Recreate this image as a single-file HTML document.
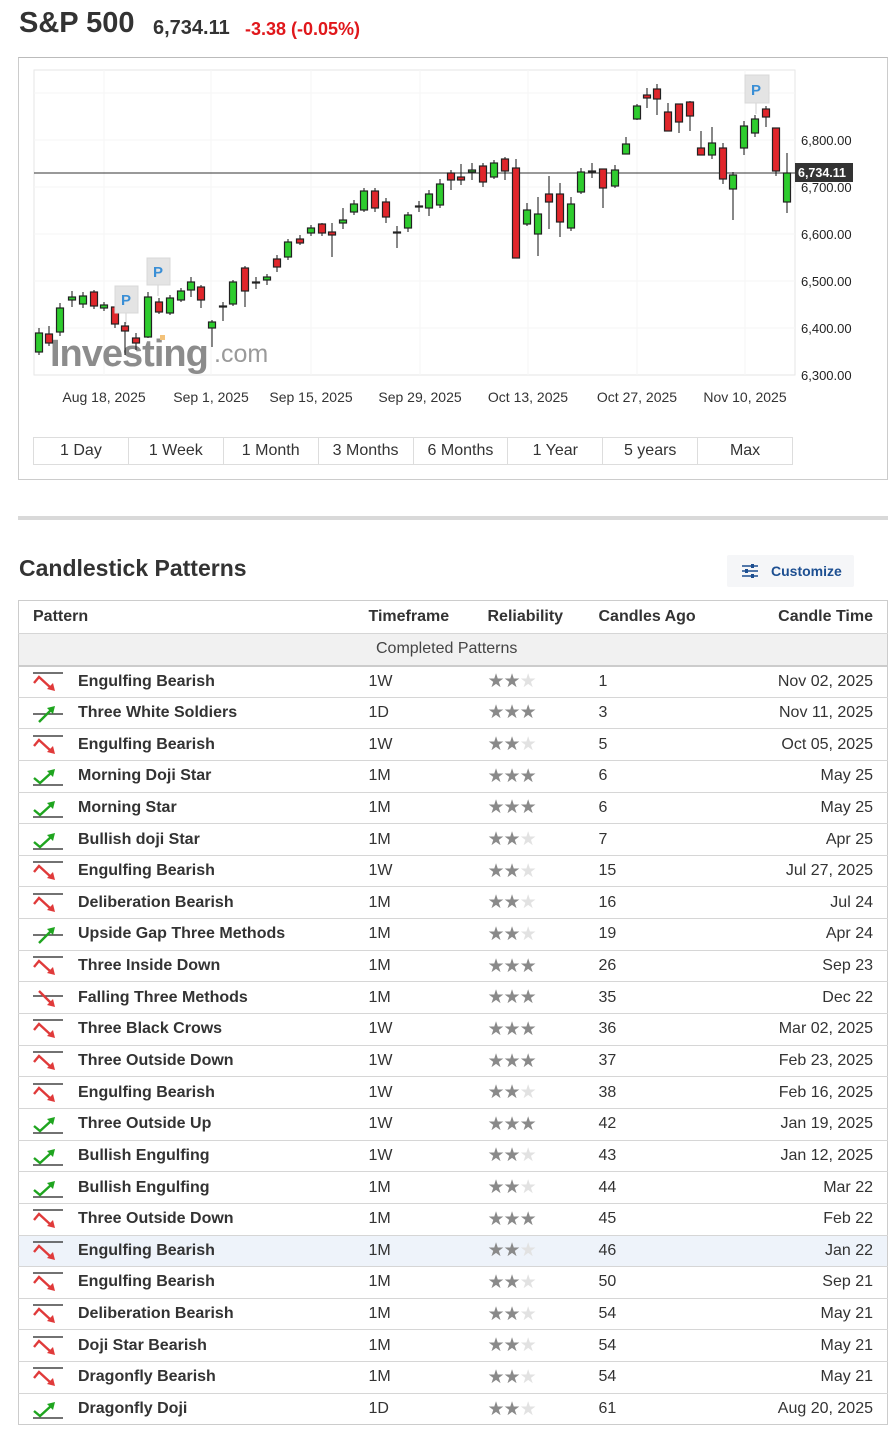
<!DOCTYPE html>
<html><head><meta charset="utf-8"><style>
*{margin:0;padding:0;box-sizing:border-box}
body{width:896px;height:1430px;background:#fff;font-family:"Liberation Sans",Arial,sans-serif;color:#333;position:relative;overflow:hidden}
.abs{position:absolute}
.title{left:19px;top:7px;font-size:29px;font-weight:bold;color:#333}
.price{left:153px;top:17px;font-size:20px;font-weight:bold;color:#333}
.chg{left:245px;top:19px;font-size:18px;font-weight:bold;color:#e0171b}
.chartbox{left:18px;top:57px;width:870px;height:423px;border:1px solid #ccc;border-top-color:#bbb}
.dates span{position:absolute;top:389px;font-size:14px;color:#333;transform:translateX(-50%);white-space:nowrap}
.tabs{left:33px;top:437px;width:760px;height:28px;border:1px solid #ddd;display:flex}
.tabs div{flex:1;border-right:1px solid #ddd;text-align:center;font-size:16px;line-height:26px;color:#333}
.tabs div:last-child{border-right:none}
.sep{left:18px;top:516px;width:870px;height:4px;background:#d9d9d9}
.h2{left:19px;top:555px;font-size:23px;font-weight:bold;color:#333}
.cust{left:727px;top:555px;width:127px;height:32px;background:#f5f6f8;border-radius:2px;font-size:14px;font-weight:bold;color:#1d4f91;line-height:32px;padding-left:44px}
table{position:absolute;left:18px;top:600px;width:870px;border-collapse:collapse;border:1px solid #ccc;font-size:16px}
th{height:33px;text-align:left;font-weight:bold;color:#333;padding:0}
td{height:31.65px;border-top:1px solid #d6d6d6;padding:0;color:#333}
.sub td{background:#f1f1f1;color:#444;height:32px;border-bottom:2px solid #ccc;padding-left:357px}
td.n{font-weight:bold}
.r{text-align:right;padding-right:14px}
tr.hl td{background:#eef3fa}
.st{color:#8a8a8a;font-size:19px;letter-spacing:-1px}
.st i{font-style:normal;color:#e2e2e2}
.ic{vertical-align:middle;margin-left:14px;margin-right:0}
</style></head><body>
<div class="abs title">S&amp;P 500</div>
<div class="abs price">6,734.11</div>
<div class="abs chg">-3.38 (-0.05%)</div>
<div class="abs chartbox"></div>
<svg class="abs" style="left:0;top:0" width="896" height="480">
<rect x="34" y="70" width="761" height="305" fill="none" stroke="#e6e6e6"/>
<g stroke="#f5f5f5">
<line x1="34" y1="93" x2="795" y2="93"/><line x1="34" y1="140" x2="795" y2="140"/><line x1="34" y1="187" x2="795" y2="187"/><line x1="34" y1="234" x2="795" y2="234"/><line x1="34" y1="281" x2="795" y2="281"/><line x1="34" y1="328" x2="795" y2="328"/>
<line x1="104" y1="70" x2="104" y2="375"/><line x1="211" y1="70" x2="211" y2="375"/><line x1="311" y1="70" x2="311" y2="375"/><line x1="420" y1="70" x2="420" y2="375"/><line x1="528" y1="70" x2="528" y2="375"/><line x1="637" y1="70" x2="637" y2="375"/><line x1="745" y1="70" x2="745" y2="375"/>
</g>
<text x="50" y="366" font-family="Liberation Sans" font-weight="bold" font-size="38" fill="#8c8c8c" letter-spacing="-1">Investing</text>
<text x="214" y="362" font-family="Liberation Sans" font-size="25" fill="#9a9a9a">.com</text>
<rect x="160" y="335" width="5" height="5" fill="#f3c27a"/>
<line x1="34" y1="173" x2="795" y2="173" stroke="#333" stroke-width="1"/>
<g stroke="#111" stroke-width="1">
<line x1="39" y1="328" x2="39" y2="355"/><line x1="49" y1="326" x2="49" y2="346"/><line x1="60" y1="303" x2="60" y2="336"/><line x1="72" y1="291" x2="72" y2="307"/><line x1="83" y1="292" x2="83" y2="308"/><line x1="94" y1="290" x2="94" y2="309"/><line x1="104" y1="302" x2="104" y2="311"/><line x1="115" y1="300" x2="115" y2="328"/><line x1="125" y1="322" x2="125" y2="355"/><line x1="136" y1="333" x2="136" y2="350"/><line x1="148" y1="292" x2="148" y2="338"/><line x1="159" y1="298" x2="159" y2="314"/><line x1="170" y1="295" x2="170" y2="315"/><line x1="181" y1="288" x2="181" y2="302"/><line x1="191" y1="277" x2="191" y2="297"/><line x1="201" y1="285" x2="201" y2="308"/><line x1="212" y1="320" x2="212" y2="347"/><line x1="223" y1="302" x2="223" y2="321"/><line x1="233" y1="280" x2="233" y2="306"/><line x1="245" y1="266" x2="245" y2="307"/><line x1="256" y1="277" x2="256" y2="289"/><line x1="267" y1="274" x2="267" y2="285"/><line x1="277" y1="255" x2="277" y2="272"/><line x1="288" y1="239" x2="288" y2="260"/><line x1="300" y1="235" x2="300" y2="245"/><line x1="311" y1="225" x2="311" y2="236"/><line x1="322" y1="223" x2="322" y2="236"/><line x1="332" y1="223" x2="332" y2="257"/><line x1="343" y1="208" x2="343" y2="229"/><line x1="354" y1="200" x2="354" y2="215"/><line x1="364" y1="188" x2="364" y2="212"/><line x1="375" y1="188" x2="375" y2="212"/><line x1="386" y1="198" x2="386" y2="223"/><line x1="397" y1="226" x2="397" y2="248"/><line x1="408" y1="212" x2="408" y2="232"/><line x1="419" y1="201" x2="419" y2="212"/><line x1="429" y1="190" x2="429" y2="216"/><line x1="440" y1="179" x2="440" y2="208"/><line x1="451" y1="170" x2="451" y2="190"/><line x1="461" y1="164" x2="461" y2="185"/><line x1="472" y1="163" x2="472" y2="180"/><line x1="483" y1="163" x2="483" y2="187"/><line x1="494" y1="160" x2="494" y2="179"/><line x1="505" y1="157" x2="505" y2="180"/><line x1="516" y1="159" x2="516" y2="258"/><line x1="527" y1="203" x2="527" y2="226"/><line x1="538" y1="197" x2="538" y2="256"/><line x1="549" y1="176" x2="549" y2="229"/><line x1="560" y1="183" x2="560" y2="237"/><line x1="571" y1="197" x2="571" y2="231"/><line x1="581" y1="168" x2="581" y2="194"/><line x1="592" y1="163" x2="592" y2="178"/><line x1="603" y1="169" x2="603" y2="208"/><line x1="615" y1="165" x2="615" y2="188"/><line x1="626" y1="137" x2="626" y2="154"/><line x1="637" y1="104" x2="637" y2="120"/><line x1="647" y1="88" x2="647" y2="108"/><line x1="657" y1="84" x2="657" y2="115"/><line x1="668" y1="103" x2="668" y2="131"/><line x1="679" y1="104" x2="679" y2="133"/><line x1="690" y1="101" x2="690" y2="131"/><line x1="701" y1="131" x2="701" y2="155"/><line x1="712" y1="127" x2="712" y2="159"/><line x1="723" y1="143" x2="723" y2="184"/><line x1="733" y1="172" x2="733" y2="220"/><line x1="744" y1="121" x2="744" y2="155"/><line x1="755" y1="115" x2="755" y2="137"/><line x1="766" y1="106" x2="766" y2="127"/><line x1="776" y1="128" x2="776" y2="176"/><line x1="787" y1="153" x2="787" y2="213"/>
</g>
<g stroke="#222" stroke-width="1.2">
<rect x="35.5" y="333" width="7" height="19" fill="#2ecc2e"/><rect x="45.5" y="334" width="7" height="9" fill="#e0262b"/><rect x="56.5" y="308" width="7" height="24" fill="#2ecc2e"/><rect x="68.5" y="297" width="7" height="3" fill="#2ecc2e"/><rect x="79.5" y="296" width="7" height="8" fill="#2ecc2e"/><rect x="90.5" y="292" width="7" height="14" fill="#e0262b"/><rect x="100.5" y="305" width="7" height="3" fill="#2ecc2e"/><rect x="111.5" y="307" width="7" height="17" fill="#e0262b"/><rect x="121.5" y="326" width="7" height="5" fill="#e0262b"/><rect x="132.5" y="338" width="7" height="5" fill="#e0262b"/><rect x="144.5" y="297" width="7" height="40" fill="#2ecc2e"/><rect x="155.5" y="302" width="7" height="10" fill="#e0262b"/><rect x="166.5" y="298" width="7" height="15" fill="#2ecc2e"/><rect x="177.5" y="291" width="7" height="9" fill="#2ecc2e"/><rect x="187.5" y="282" width="7" height="8" fill="#2ecc2e"/><rect x="197.5" y="287" width="7" height="13" fill="#e0262b"/><rect x="208.5" y="322" width="7" height="6" fill="#2ecc2e"/><rect x="219.5" y="306" width="7" height="1" fill="#2ecc2e"/><rect x="229.5" y="282" width="7" height="22" fill="#2ecc2e"/><rect x="241.5" y="268" width="7" height="23" fill="#e0262b"/><rect x="252.5" y="282" width="7" height="1" fill="#2ecc2e"/><rect x="263.5" y="277" width="7" height="3" fill="#2ecc2e"/><rect x="273.5" y="259" width="7" height="8" fill="#e0262b"/><rect x="284.5" y="242" width="7" height="15" fill="#2ecc2e"/><rect x="296.5" y="239" width="7" height="4" fill="#e0262b"/><rect x="307.5" y="228" width="7" height="5" fill="#2ecc2e"/><rect x="318.5" y="224" width="7" height="9" fill="#e0262b"/><rect x="328.5" y="232" width="7" height="3" fill="#e0262b"/><rect x="339.5" y="220" width="7" height="3" fill="#2ecc2e"/><rect x="350.5" y="204" width="7" height="8" fill="#2ecc2e"/><rect x="360.5" y="191" width="7" height="19" fill="#2ecc2e"/><rect x="371.5" y="191" width="7" height="17" fill="#e0262b"/><rect x="382.5" y="202" width="7" height="15" fill="#e0262b"/><rect x="393.5" y="232" width="7" height="1" fill="#2ecc2e"/><rect x="404.5" y="215" width="7" height="13" fill="#2ecc2e"/><rect x="415.5" y="206" width="7" height="1" fill="#2ecc2e"/><rect x="425.5" y="194" width="7" height="14" fill="#2ecc2e"/><rect x="436.5" y="184" width="7" height="21" fill="#2ecc2e"/><rect x="447.5" y="173" width="7" height="7" fill="#e0262b"/><rect x="457.5" y="177" width="7" height="3" fill="#e0262b"/><rect x="468.5" y="170" width="7" height="2" fill="#2ecc2e"/><rect x="479.5" y="166" width="7" height="16" fill="#e0262b"/><rect x="490.5" y="163" width="7" height="14" fill="#2ecc2e"/><rect x="501.5" y="159" width="7" height="12" fill="#e0262b"/><rect x="512.5" y="168" width="7" height="90" fill="#e0262b"/><rect x="523.5" y="210" width="7" height="14" fill="#2ecc2e"/><rect x="534.5" y="214" width="7" height="20" fill="#2ecc2e"/><rect x="545.5" y="194" width="7" height="8" fill="#e0262b"/><rect x="556.5" y="194" width="7" height="28" fill="#e0262b"/><rect x="567.5" y="204" width="7" height="24" fill="#2ecc2e"/><rect x="577.5" y="172" width="7" height="20" fill="#2ecc2e"/><rect x="588.5" y="171" width="7" height="1" fill="#2ecc2e"/><rect x="599.5" y="169" width="7" height="19" fill="#e0262b"/><rect x="611.5" y="170" width="7" height="16" fill="#2ecc2e"/><rect x="622.5" y="144" width="7" height="10" fill="#2ecc2e"/><rect x="633.5" y="106" width="7" height="13" fill="#2ecc2e"/><rect x="643.5" y="95" width="7" height="3" fill="#e0262b"/><rect x="653.5" y="89" width="7" height="10" fill="#e0262b"/><rect x="664.5" y="112" width="7" height="19" fill="#e0262b"/><rect x="675.5" y="104" width="7" height="18" fill="#e0262b"/><rect x="686.5" y="102" width="7" height="14" fill="#e0262b"/><rect x="697.5" y="148" width="7" height="7" fill="#e0262b"/><rect x="708.5" y="143" width="7" height="12" fill="#2ecc2e"/><rect x="719.5" y="148" width="7" height="31" fill="#e0262b"/><rect x="729.5" y="175" width="7" height="14" fill="#2ecc2e"/><rect x="740.5" y="126" width="7" height="22" fill="#2ecc2e"/><rect x="751.5" y="119" width="7" height="14" fill="#2ecc2e"/><rect x="762.5" y="109" width="7" height="8" fill="#e0262b"/><rect x="772.5" y="128" width="7" height="43" fill="#e0262b"/><rect x="783.5" y="173" width="7" height="29" fill="#2ecc2e"/>
</g>
<g font-family="Liberation Sans" font-weight="bold" font-size="15" fill="#3a8fd6" stroke="none">
<line x1="126" y1="313" x2="126" y2="324" stroke="#ccc"/><rect x="115" y="286" width="23" height="27" fill="#e4e4e4" stroke="#d8d8d8"/><text x="121" y="305">P</text>
<line x1="158" y1="285" x2="158" y2="296" stroke="#ccc"/><rect x="147" y="258" width="23" height="27" fill="#e4e4e4" stroke="#d8d8d8"/><text x="153" y="277">P</text>
<line x1="756" y1="103" x2="756" y2="114" stroke="#ccc"/><rect x="745" y="75" width="24" height="28" fill="#e4e4e4" stroke="#d8d8d8"/><text x="751" y="95">P</text>
</g>
<g font-family="Liberation Sans" font-size="13" fill="#222">
<text x="801" y="145">6,800.00</text><text x="801" y="192">6,700.00</text><text x="801" y="239">6,600.00</text><text x="801" y="286">6,500.00</text><text x="801" y="333">6,400.00</text><text x="801" y="380">6,300.00</text>
</g>
<rect x="795" y="163" width="58" height="19" fill="#333"/>
<text x="798" y="177" font-family="Liberation Sans" font-weight="bold" font-size="12.5" fill="#fff">6,734.11</text>
</svg>
<div class="dates"><span style="left:104px">Aug 18, 2025</span><span style="left:211px">Sep 1, 2025</span><span style="left:311px">Sep 15, 2025</span><span style="left:420px">Sep 29, 2025</span><span style="left:528px">Oct 13, 2025</span><span style="left:637px">Oct 27, 2025</span><span style="left:745px">Nov 10, 2025</span></div>
<div class="abs tabs"><div>1 Day</div><div>1 Week</div><div>1 Month</div><div>3 Months</div><div>6 Months</div><div>1 Year</div><div>5 years</div><div>Max</div></div>
<div class="abs sep"></div>
<div class="abs h2">Candlestick Patterns</div>
<div class="abs cust"><svg class="abs" style="left:15px;top:9px" width="17" height="14"><g stroke="#1d4f91" stroke-width="1.5"><line x1="0" y1="2" x2="16" y2="2"/><line x1="0" y1="7" x2="16" y2="7"/><line x1="0" y1="12" x2="16" y2="12"/></g><g fill="#1d4f91"><rect x="9" y="0" width="3" height="4"/><rect x="3" y="5" width="3" height="4"/><rect x="9" y="10" width="3" height="4"/></g></svg>Customize</div>
<svg width="0" height="0" style="position:absolute">
<defs>
<g id="bear"><line x1="0" y1="1" x2="30" y2="1" stroke="#444" stroke-width="1.5"/><polyline points="1,11 6,5 18,16" fill="none" stroke="#e03a3a" stroke-width="2.4"/><polygon points="22,19 14,17 20,11" fill="#e03a3a"/></g>
<g id="bull"><line x1="0" y1="19" x2="30" y2="19" stroke="#444" stroke-width="1.5"/><polyline points="1,12 7,17 18,7" fill="none" stroke="#1fa51f" stroke-width="2.4"/><polygon points="22,3 14,5 20,11" fill="#1fa51f"/></g>
<g id="mup"><line x1="0" y1="11" x2="30" y2="11" stroke="#444" stroke-width="1.5"/><line x1="6" y1="19" x2="18" y2="7" stroke="#1fa51f" stroke-width="2.4"/><polygon points="22,3 14,5 20,11" fill="#1fa51f"/></g>
<g id="mdn"><line x1="0" y1="8" x2="30" y2="8" stroke="#444" stroke-width="1.5"/><line x1="6" y1="3" x2="18" y2="15" stroke="#e03a3a" stroke-width="2.4"/><polygon points="22,19 14,17 20,11" fill="#e03a3a"/></g>
</defs></svg>
<table>
<tr><th style="padding-left:14px;width:350px">Pattern</th><th style="width:119px">Timeframe</th><th style="width:111px">Reliability</th><th style="width:120px">Candles Ago</th><th class="r">Candle Time</th></tr>
<tr class="sub"><td colspan="5">Completed Patterns</td></tr>
<tr><td class="n"><svg class="ic" width="45" height="20"><use href="#bear"/></svg>Engulfing Bearish</td><td>1W</td><td class="st">★★<i>★</i></td><td>1</td><td class="r">Nov 02, 2025</td></tr>
<tr><td class="n"><svg class="ic" width="45" height="20"><use href="#mup"/></svg>Three White Soldiers</td><td>1D</td><td class="st">★★★</td><td>3</td><td class="r">Nov 11, 2025</td></tr>
<tr><td class="n"><svg class="ic" width="45" height="20"><use href="#bear"/></svg>Engulfing Bearish</td><td>1W</td><td class="st">★★<i>★</i></td><td>5</td><td class="r">Oct 05, 2025</td></tr>
<tr><td class="n"><svg class="ic" width="45" height="20"><use href="#bull"/></svg>Morning Doji Star</td><td>1M</td><td class="st">★★★</td><td>6</td><td class="r">May 25</td></tr>
<tr><td class="n"><svg class="ic" width="45" height="20"><use href="#bull"/></svg>Morning Star</td><td>1M</td><td class="st">★★★</td><td>6</td><td class="r">May 25</td></tr>
<tr><td class="n"><svg class="ic" width="45" height="20"><use href="#bull"/></svg>Bullish doji Star</td><td>1M</td><td class="st">★★<i>★</i></td><td>7</td><td class="r">Apr 25</td></tr>
<tr><td class="n"><svg class="ic" width="45" height="20"><use href="#bear"/></svg>Engulfing Bearish</td><td>1W</td><td class="st">★★<i>★</i></td><td>15</td><td class="r">Jul 27, 2025</td></tr>
<tr><td class="n"><svg class="ic" width="45" height="20"><use href="#bear"/></svg>Deliberation Bearish</td><td>1M</td><td class="st">★★<i>★</i></td><td>16</td><td class="r">Jul 24</td></tr>
<tr><td class="n"><svg class="ic" width="45" height="20"><use href="#mup"/></svg>Upside Gap Three Methods</td><td>1M</td><td class="st">★★<i>★</i></td><td>19</td><td class="r">Apr 24</td></tr>
<tr><td class="n"><svg class="ic" width="45" height="20"><use href="#bear"/></svg>Three Inside Down</td><td>1M</td><td class="st">★★★</td><td>26</td><td class="r">Sep 23</td></tr>
<tr><td class="n"><svg class="ic" width="45" height="20"><use href="#mdn"/></svg>Falling Three Methods</td><td>1M</td><td class="st">★★★</td><td>35</td><td class="r">Dec 22</td></tr>
<tr><td class="n"><svg class="ic" width="45" height="20"><use href="#bear"/></svg>Three Black Crows</td><td>1W</td><td class="st">★★★</td><td>36</td><td class="r">Mar 02, 2025</td></tr>
<tr><td class="n"><svg class="ic" width="45" height="20"><use href="#bear"/></svg>Three Outside Down</td><td>1W</td><td class="st">★★★</td><td>37</td><td class="r">Feb 23, 2025</td></tr>
<tr><td class="n"><svg class="ic" width="45" height="20"><use href="#bear"/></svg>Engulfing Bearish</td><td>1W</td><td class="st">★★<i>★</i></td><td>38</td><td class="r">Feb 16, 2025</td></tr>
<tr><td class="n"><svg class="ic" width="45" height="20"><use href="#bull"/></svg>Three Outside Up</td><td>1W</td><td class="st">★★★</td><td>42</td><td class="r">Jan 19, 2025</td></tr>
<tr><td class="n"><svg class="ic" width="45" height="20"><use href="#bull"/></svg>Bullish Engulfing</td><td>1W</td><td class="st">★★<i>★</i></td><td>43</td><td class="r">Jan 12, 2025</td></tr>
<tr><td class="n"><svg class="ic" width="45" height="20"><use href="#bull"/></svg>Bullish Engulfing</td><td>1M</td><td class="st">★★<i>★</i></td><td>44</td><td class="r">Mar 22</td></tr>
<tr><td class="n"><svg class="ic" width="45" height="20"><use href="#bear"/></svg>Three Outside Down</td><td>1M</td><td class="st">★★★</td><td>45</td><td class="r">Feb 22</td></tr>
<tr class="hl"><td class="n"><svg class="ic" width="45" height="20"><use href="#bear"/></svg>Engulfing Bearish</td><td>1M</td><td class="st">★★<i>★</i></td><td>46</td><td class="r">Jan 22</td></tr>
<tr><td class="n"><svg class="ic" width="45" height="20"><use href="#bear"/></svg>Engulfing Bearish</td><td>1M</td><td class="st">★★<i>★</i></td><td>50</td><td class="r">Sep 21</td></tr>
<tr><td class="n"><svg class="ic" width="45" height="20"><use href="#bear"/></svg>Deliberation Bearish</td><td>1M</td><td class="st">★★<i>★</i></td><td>54</td><td class="r">May 21</td></tr>
<tr><td class="n"><svg class="ic" width="45" height="20"><use href="#bear"/></svg>Doji Star Bearish</td><td>1M</td><td class="st">★★<i>★</i></td><td>54</td><td class="r">May 21</td></tr>
<tr><td class="n"><svg class="ic" width="45" height="20"><use href="#bear"/></svg>Dragonfly Bearish</td><td>1M</td><td class="st">★★<i>★</i></td><td>54</td><td class="r">May 21</td></tr>
<tr><td class="n"><svg class="ic" width="45" height="20"><use href="#bull"/></svg>Dragonfly Doji</td><td>1D</td><td class="st">★★<i>★</i></td><td>61</td><td class="r">Aug 20, 2025</td></tr>
</table>
</body></html>
